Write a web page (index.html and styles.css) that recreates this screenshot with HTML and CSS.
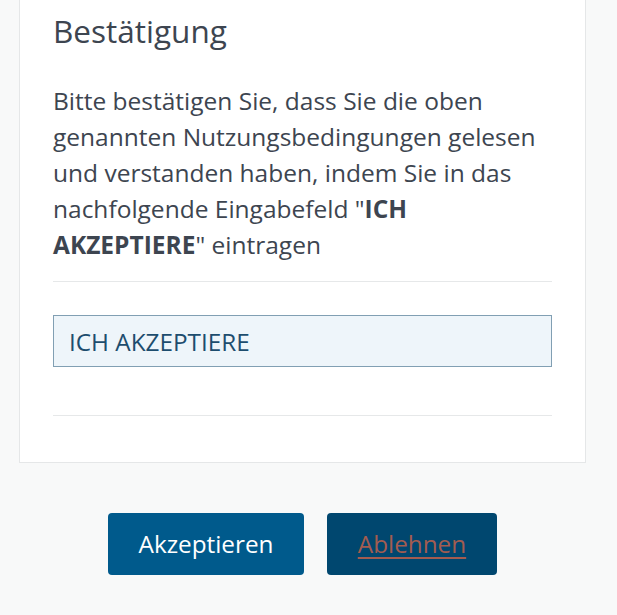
FILE: index.html
```html
<html>

<head>
    <meta charset="UTF-8">
    <meta name="viewport" content="width=device-width, initial-scale=1.0">
    <title>Bestätigung</title>
    <link rel="stylesheet" href="styles.css">
</head>

<body>
    <div class="page">
        <div class="card">
            <h2>Bestätigung</h2>
            <p class="hint">Bitte bestätigen Sie, dass Sie die oben genannten Nutzungsbedingungen gelesen und verstanden haben, indem Sie in das nachfolgende Eingabefeld "<strong>ICH AKZEPTIERE</strong>" eintragen</p>
            <hr>
            <input type="text" id="confirmInput" value="ICH AKZEPTIERE">
            <hr class="bottom-line">
        </div>

        <div class="actions">
            <button class="btn btn-accept">Akzeptieren</button>
            <button class="btn btn-decline"><span>Ablehnen</span></button>
        </div>
    </div>
</body>

</html>
```

FILE: styles.css
```css
body {
    font-family: "Open Sans", "Liberation Sans", sans-serif;
    margin: 0;
    background-color: #f8f9f9;
    color: #3d4550;
}

.page {
    width: 567px;
    margin-left: 19px;
}

.card {
    background-color: #ffffff;
    border: 1px solid #e5e7e8;
    border-top: none;
    padding: 12px 33px 46px 33px;
}

h2 {
    font-size: 31.5px;
    font-weight: 400;
    line-height: 37px;
    margin: 0 0 34px 0;
}

.hint {
    font-size: 24.5px;
    line-height: 36px;
    margin: 0 0 18px 0;
}

.hint strong {
    font-weight: 700;
}

hr {
    border: none;
    border-top: 1px solid #e6e8e9;
    margin: 0 0 33px 0;
}

input[type="text"] {
    display: block;
    box-sizing: border-box;
    width: 100%;
    height: 52px;
    padding: 0 15px;
    font-family: inherit;
    font-size: 24.3px;
    color: #1d4d6e;
    background-color: #eef5fa;
    border: 1px solid #819fb3;
    border-radius: 0;
    outline: none;
}

.bottom-line {
    margin: 48px 0 0 0;
}

.actions {
    display: flex;
    justify-content: center;
    gap: 23px;
    margin-top: 50px;
}

.btn {
    font-family: inherit;
    font-size: 24.3px;
    line-height: 36px;
    padding: 13px 0;
    border: none;
    border-radius: 4px;
    cursor: pointer;
}

.btn-accept {
    width: 196px;
    background-color: #005a8c;
    color: #ffffff;
}

.btn-decline {
    width: 170px;
    background-color: #00476f;
    color: #a35c50;
}

.btn-decline span {
    text-decoration: underline;
    text-underline-offset: 4px;
}
```
